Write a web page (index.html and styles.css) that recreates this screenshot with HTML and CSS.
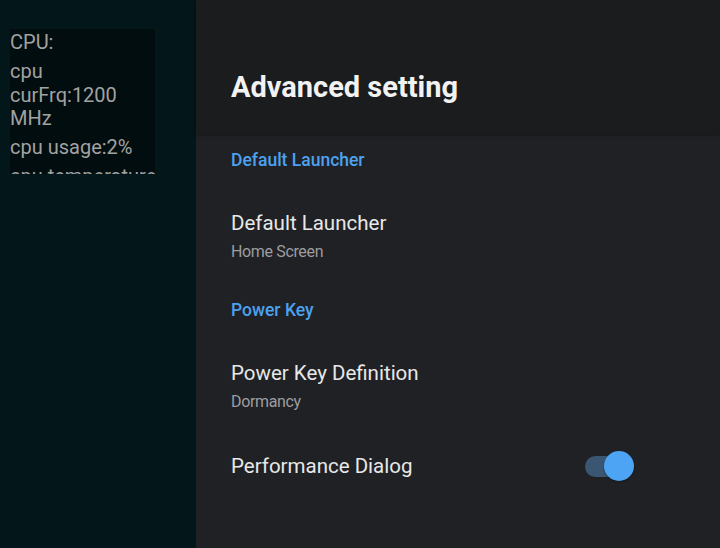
FILE: index.html
```html
<!DOCTYPE html>
<html lang="en">
<head>
    <meta charset="UTF-8">
    <meta name="viewport" content="width=device-width, initial-scale=1.0">
    <title>Advanced setting</title>
    <link rel="stylesheet" href="styles.css">
</head>
<body>
    <div class="overlay-panel">
        <div class="cpu-box">
            <p>CPU:</p>
            <p>cpu<br>curFrq:1200<br>MHz</p>
            <p>cpu usage:2%</p>
            <p>cpu temperature:45</p>
        </div>
    </div>
    <div class="settings">
        <div class="settings-header">
            <h1>Advanced setting</h1>
        </div>
        <div class="settings-list">
            <div class="category">Default Launcher</div>
            <div class="item">
                <div class="item-text">
                    <div class="item-title">Default Launcher</div>
                    <div class="item-summary">Home Screen</div>
                </div>
            </div>
            <div class="category">Power Key</div>
            <div class="item">
                <div class="item-text">
                    <div class="item-title">Power Key Definition</div>
                    <div class="item-summary">Dormancy</div>
                </div>
            </div>
            <div class="item">
                <div class="item-text">
                    <div class="item-title">Performance Dialog</div>
                </div>
                <div class="switch on">
                    <span class="switch-track"></span>
                    <span class="switch-thumb"></span>
                </div>
            </div>
        </div>
    </div>
</body>
</html>
```

FILE: styles.css
```css
body {
    font-family: Roboto, 'Noto Sans', sans-serif;
    margin: 0;
    width: 720px;
    height: 548px;
    display: flex;
    overflow: hidden;
    background-color: #031619;
}

.overlay-panel {
    width: 196px;
    flex-shrink: 0;
    padding: 29px 0 0 10px;
    box-sizing: border-box;
    background-color: #031619;
}

.cpu-box {
    width: 145px;
    height: 145px;
    padding-top: 2px;
    box-sizing: border-box;
    overflow: hidden;
    background-color: #010d0f;
    color: #a2a2a2;
    font-size: 20px;
    line-height: 23.5px;
}

.cpu-box p {
    margin: 0 0 5.5px;
    white-space: nowrap;
}

.settings {
    flex: 1;
    display: flex;
    flex-direction: column;
    background-color: #202125;
}

.settings-header {
    height: 134px;
    box-sizing: border-box;
    padding: 70px 0 0 35px;
    background-color: #1b1c1e;
    box-shadow: 0 1px 3px rgba(0, 0, 0, 0.35);
}

.settings-header h1 {
    margin: 0;
    color: #f2f2f2;
    font-size: 29px;
    line-height: 34px;
    font-weight: 700;
}

.settings-list {
    padding: 0 86px 0 35px;
}

.category {
    padding: 21px 0 18px;
    line-height: 20px;
    font-size: 17.5px;
    font-weight: 500;
    color: #4ca2ee;
}

.category:first-child {
    padding-top: 16px;
}

.item {
    display: flex;
    align-items: center;
    justify-content: space-between;
    padding: 22px 0 17px;
}

.item-title {
    font-size: 20.5px;
    line-height: 26px;
    color: #e8e8e8;
}

.item-summary {
    margin-top: 6px;
    font-size: 16px;
    line-height: 20px;
    letter-spacing: -0.35px;
    color: #9d9d9f;
}

.switch {
    position: relative;
    width: 49px;
    height: 30px;
}

.switch-track {
    position: absolute;
    left: 0;
    top: 5px;
    width: 44px;
    height: 21px;
    border-radius: 11px;
    background-color: #3a5672;
}

.switch-thumb {
    position: absolute;
    left: 19px;
    top: 0;
    width: 30px;
    height: 30px;
    border-radius: 50%;
    background-color: #4da4f4;
    box-shadow: 0 1px 2px rgba(0, 0, 0, 0.3);
}
```
